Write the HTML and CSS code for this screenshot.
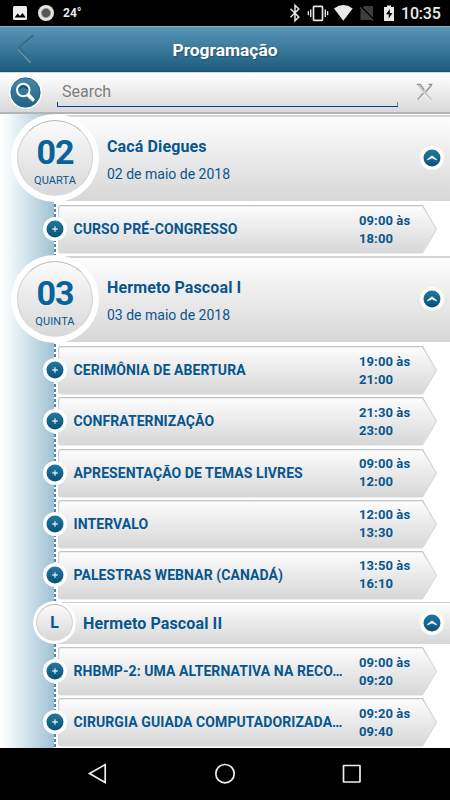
FILE: index.html
```html
<!DOCTYPE html>
<html lang="pt-BR">
<head>
<meta charset="utf-8">
<title>Programação</title>
<link rel="stylesheet" href="styles.css">
</head>
<body>
<svg class="defs" width="0" height="0" aria-hidden="true">
  <defs>
    <linearGradient id="silver" x1="0" y1="0" x2="0" y2="1"><stop offset="0" stop-color="#fdfdfd"/><stop offset="1" stop-color="#d7d7d7"/></linearGradient>
    <linearGradient id="edge" x1="0" y1="0" x2="0" y2="1"><stop offset="0" stop-color="#c4c4c4"/><stop offset=".2" stop-color="#d6d6d6"/><stop offset="1" stop-color="#dadada"/></linearGradient>
    <linearGradient id="blue" x1="0" y1="0" x2="0" y2="1"><stop offset="0" stop-color="#2378a0"/><stop offset="1" stop-color="#085176"/></linearGradient>
    <linearGradient id="lensblue" x1="0" y1="0" x2="0" y2="1"><stop offset="0" stop-color="#4689ab"/><stop offset="1" stop-color="#226283"/></linearGradient>
  </defs>
  <symbol id="tag" viewBox="0 0 380 49"><path d="M3 .6H364.500L378.500 24.200 364.500 48H3Q.6 48 .6 45.600V3Q.6.6 3 .6Z" fill="url(#silver)" stroke="url(#edge)" stroke-width="1.200"/></symbol>
  <symbol id="plus" viewBox="0 0 24 24"><circle cx="12" cy="12" r="12" fill="#fff"/><circle cx="12" cy="12" r="8.500" fill="url(#blue)"/><path d="M9.300 12h5.400M12 9.300v5.400" stroke="#d5e6ee" stroke-width="1.300"/></symbol>
  <symbol id="up" viewBox="0 0 24 24"><circle cx="12" cy="12" r="12" fill="#fff"/><circle cx="12" cy="12" r="8.500" fill="url(#blue)"/><path d="M7.400 13.300 12 9.700l4.600 3.600v.8L12 12l-4.600 2.100Z" fill="#fff" stroke="#fff" stroke-width=".5"/></symbol>
</svg>
<div class="screen">
  <div class="status">
    <svg class="status-left" width="48" height="26" viewBox="0 0 48 26">
      <rect x="5" y="6" width="14" height="14" rx="1.500" fill="#eee"/>
      <path d="M6.500 17.500l3.200-4 2.300 2.600 2.500-3.100 3.300 4.500Z" fill="#000"/>
      <circle cx="38" cy="13" r="8" fill="#e2e2e2"/><circle cx="38" cy="13" r="4.600" fill="#555" stroke="#999" stroke-width="1"/>
    </svg>
    <span class="temp">24°</span>
    <svg class="status-right" width="112" height="26" viewBox="0 0 112 26">
      <path d="M4.500 8.700l8.300 8.300-3.800 3.800V5.200l3.800 3.800L4.500 17.300" fill="none" stroke="#e6e6e6" stroke-width="1.500"/>
      <rect x="27.500" y="6.300" width="9" height="14" rx=".8" fill="none" stroke="#e6e6e6" stroke-width="1.700"/>
      <path d="M24.700 9.500v7.500M22.400 11.200v4M39.300 9.500v7.500M41.600 11.200v4" stroke="#e6e6e6" stroke-width="1.400"/>
      <path d="M48 8.500Q57.300 1.700 66.700 8.500L57.300 20.800Z" fill="#e8e8e8"/>
      <path d="M78.500 6H87v14H74.500V9.500Z" fill="#3e3e3e"/><path d="M73 5.500l14 14" stroke="#000" stroke-width="2.500"/><path d="M74 7.500l13 13" stroke="#484848" stroke-width="1.300"/>
      <path d="M98 7h3V5.500h4V7h3v14H98Z" fill="#e8e8e8"/><path d="M103.800 9l-3.800 5.300h2.700v4.200l3.800-5.500h-2.700Z" fill="#000"/>
    </svg>
    <span class="clock">10:35</span>
  </div>

  <header class="appbar">
    <svg class="back" width="24" height="30" viewBox="0 0 24 30"><path d="M17.200 2.500 4.200 14.500 16 27.200" fill="none" stroke="#6098b4" stroke-width="2" stroke-linecap="round" transform="translate(-.8 .8)"/><path d="M17.200 2 4 14 16 26.700" fill="none" stroke="#396b83" stroke-width="2.200" stroke-linecap="round"/></svg>
    <h1>Programação</h1>
  </header>

  <div class="search">
    <svg class="lens" width="33" height="33" viewBox="0 0 33 33"><circle cx="16.500" cy="16.500" r="16.500" fill="#fff"/><circle cx="16.500" cy="16.500" r="14.700" fill="url(#lensblue)" stroke="#1f6183" stroke-width=".8"/><path d="M19 18.500 23.500 23.500" stroke="#fff" stroke-width="4" stroke-linecap="round"/><circle cx="14.300" cy="14" r="6.300" fill="#34789b" stroke="#fff" stroke-width="1.900"/><path d="M10.500 12.800Q14.300 7.800 18.300 12.800" stroke="#123d63" stroke-width="1.300" fill="none"/><path d="M21 22.500l2.300 2.600" stroke="#5b7d92" stroke-width=".8"/></svg>
    <div class="field">Search</div>
    <svg class="clear" width="18" height="19" viewBox="0 0 18 19"><path d="M2 17.500 15.500 2" stroke="#d5d5d5" stroke-width="2"/><path d="M2.500 2 15.200 17" stroke="#c9c9c9" stroke-width="2.400"/><path d="M.8 1.400H4.300L8.300 6.800M12.500 1.400H16.400M15.600 2.200 9.800 8.800M7.200 10.200 1.700 16.500" stroke="#8d8d8d" stroke-width="1.100" fill="none"/><path d="M2.500 18 8.700 11.300l6 6.600" stroke="#fff" stroke-width=".8" fill="none"/></svg>
  </div>

  <main class="list">
    <section class="day">
      <div class="disc"><div class="disc-in"><b>02</b><span>QUARTA</span></div></div>
      <div class="day-text"><h2>Cacá Diegues</h2><p>02 de maio de 2018</p></div>
      <svg class="ico up"><use href="#up"/></svg>
    </section>
    <article class="item"><svg class="ico"><use href="#plus"/></svg><div class="card"><svg class="shape"><use href="#tag"/></svg><h3>CURSO PRÉ-CONGRESSO</h3><time>09:00 às<br>18:00</time></div></article>

    <section class="day">
      <div class="disc"><div class="disc-in"><b>03</b><span>QUINTA</span></div></div>
      <div class="day-text"><h2>Hermeto Pascoal I</h2><p>03 de maio de 2018</p></div>
      <svg class="ico up"><use href="#up"/></svg>
    </section>
    <article class="item"><svg class="ico"><use href="#plus"/></svg><div class="card"><svg class="shape"><use href="#tag"/></svg><h3>CERIMÔNIA DE ABERTURA</h3><time>19:00 às<br>21:00</time></div></article>
    <article class="item"><svg class="ico"><use href="#plus"/></svg><div class="card"><svg class="shape"><use href="#tag"/></svg><h3>CONFRATERNIZAÇÃO</h3><time>21:30 às<br>23:00</time></div></article>
    <article class="item"><svg class="ico"><use href="#plus"/></svg><div class="card"><svg class="shape"><use href="#tag"/></svg><h3>APRESENTAÇÃO DE TEMAS LIVRES</h3><time>09:00 às<br>12:00</time></div></article>
    <article class="item"><svg class="ico"><use href="#plus"/></svg><div class="card"><svg class="shape"><use href="#tag"/></svg><h3>INTERVALO</h3><time>12:00 às<br>13:30</time></div></article>
    <article class="item"><svg class="ico"><use href="#plus"/></svg><div class="card"><svg class="shape"><use href="#tag"/></svg><h3>PALESTRAS WEBNAR (CANADÁ)</h3><time>13:50 às<br>16:10</time></div></article>

    <section class="room">
      <div class="disc small"><div class="disc-in"><b>L</b></div></div>
      <h2>Hermeto Pascoal II</h2>
      <svg class="ico up"><use href="#up"/></svg>
    </section>
    <article class="item"><svg class="ico"><use href="#plus"/></svg><div class="card"><svg class="shape"><use href="#tag"/></svg><h3>RHBMP-2: UMA ALTERNATIVA NA RECO…</h3><time>09:00 às<br>09:20</time></div></article>
    <article class="item"><svg class="ico"><use href="#plus"/></svg><div class="card"><svg class="shape"><use href="#tag"/></svg><h3>CIRURGIA GUIADA COMPUTADORIZADA…</h3><time>09:20 às<br>09:40</time></div></article>
  </main>

  <nav class="navbar">
    <svg width="22" height="22" viewBox="0 0 22 22"><path d="M18.200 1.600v18L2.500 10.600Z"/></svg>
    <svg width="22" height="22" viewBox="0 0 22 22"><circle cx="11" cy="10.700" r="9.200"/></svg>
    <svg width="22" height="22" viewBox="0 0 22 22"><rect x="2.500" y="2.500" width="16.500" height="16.500" rx=".5"/></svg>
  </nav>
</div>
</body>
</html>
```
FILE: styles.css
```css
* { box-sizing: border-box; margin: 0; padding: 0; }
body { font-family: Roboto, "Liberation Sans", sans-serif; background: #fff; }
svg { display: block; flex: none; }
.defs { position: absolute; }
.screen { width: 450px; height: 800px; display: flex; flex-direction: column; overflow: hidden; }

.status { height: 26px; flex: none; background: #000; display: flex; align-items: center; padding: 0 8px; color: #ebebeb; }
.temp { margin-left: 7px; font-size: 12px; font-weight: 700; }
.status-right { margin-left: auto; }
.clock { margin-left: 3px; font-size: 16px; font-weight: 500; width: 41px; padding-top: 1px; letter-spacing: -.2px; white-space: nowrap; }

.appbar { height: 46px; flex: none; display: grid; grid-template-columns: 34px 1fr 34px; align-items: center; padding: 0 8px; background: linear-gradient(#5895b7, #1d5c7c); border-top: 1px solid #86b3ca; border-bottom: 1px solid #1c4f69; }
.back { margin-left: 7px; }
.appbar h1 { text-align: center; color: #fff; font-size: 17.400px; font-weight: 700; line-height: 24px; padding-top: 1px; text-shadow: 1px 1px 1px #24536a; }

.search { height: 42px; flex: none; display: flex; align-items: center; padding: 0 16px 0 9px; background: linear-gradient(#fff, #d9d9d9); border-top: 1px solid #d5d9db; border-bottom: 2px solid #b5b5b5; }
.lens { margin-top: -1px; }
.field { width: 341px; height: 31px; margin: -2px 0 0 15px; padding-left: 5px; font-size: 16px; line-height: 31px; color: #7d7d7d; background: linear-gradient(#0d3b9b, #0d3b9b) left bottom / 1px 4px no-repeat, linear-gradient(#7583a6, #7583a6) right bottom / 1px 4px no-repeat; border-bottom: 1px solid #0d3b9b; }
.clear { margin-left: 18px; }

.list { height: 634px; flex: none; padding-top: 1px; color: #08568d; background: repeating-linear-gradient(#4f86a5 0 3px, #fff 3px 5px) 54px 0 / 2px 100% no-repeat, linear-gradient(90deg, #fff 0, #fafdfd 5px, #9fc2d5 54px, #fff 54px); overflow: hidden; }
.day { height: 86px; margin-bottom: 4px; display: flex; align-items: center; padding: 0 6px 0 11px; background: linear-gradient(#d4d4d4 0 2px, #fdfdfd 2px, #d7d7d7 100%) 55px 0 / 395px 100% no-repeat; }
.disc { width: 88px; height: 88px; flex: none; margin: -1px 0; padding: 6px; border-radius: 50%; background: #fff; }
.disc-in { height: 100%; border: 1px solid; border-color: #b9b9b9 #d0d0d0 #dedede; border-radius: 50%; background: linear-gradient(#fbfbfb, #d8d8d8); display: flex; flex-direction: column; align-items: center; }
.disc b { font-size: 34px; font-weight: 700; line-height: 36px; margin-top: 13px; color: #08629b; letter-spacing: -1px; }
.disc span { font-size: 11px; line-height: 14px; margin-top: 4px; letter-spacing: .1px; }
.day-text { margin-left: 8px; flex: 1; padding-top: 3px; }
h2 { font-size: 16px; font-weight: 700; line-height: 24px; letter-spacing: .12px; }
.day-text p { font-size: 14px; line-height: 20px; margin-top: 5px; }
.ico { width: 24px; height: 24px; }

.item { height: 51.200px; display: flex; padding-left: 43px; }
.item .ico { position: relative; z-index: 1; margin-top: 12px; }
.card { position: relative; width: 380px; height: 49px; margin-left: -9px; display: flex; align-items: center; padding-left: 15.500px; }
.shape { position: absolute; inset: 0; width: 380px; height: 49px; }
.card h3, .card time { position: relative; }
h3 { width: 285.500px; font-size: 14px; font-weight: 700; white-space: nowrap; line-height: 20px; letter-spacing: .08px; padding-bottom: 1px; }
time { font-size: 13px; font-weight: 700; line-height: 18px; white-space: nowrap; letter-spacing: .1px; }

.room { height: 42.500px; margin: -.5px 0 3px; display: flex; align-items: center; padding: 0 6px 0 33px; background: linear-gradient(#d0d0d0 0 1px, #fdfdfd 1px, #d7d7d7) 55px 0 / 395px 100% no-repeat; }
.disc.small { width: 43px; height: 43px; padding: 3px; }
.small b { font-size: 16px; line-height: 36px; margin: 0; color: #08568d; letter-spacing: 0; }
.room h2 { margin-left: 7px; flex: 1; padding-top: 2px; }

.navbar { height: 52px; flex: none; background: #000; display: flex; justify-content: center; align-items: center; gap: 105px; }
.navbar svg { fill: none; stroke: #eee; stroke-width: 1.700; }
```
